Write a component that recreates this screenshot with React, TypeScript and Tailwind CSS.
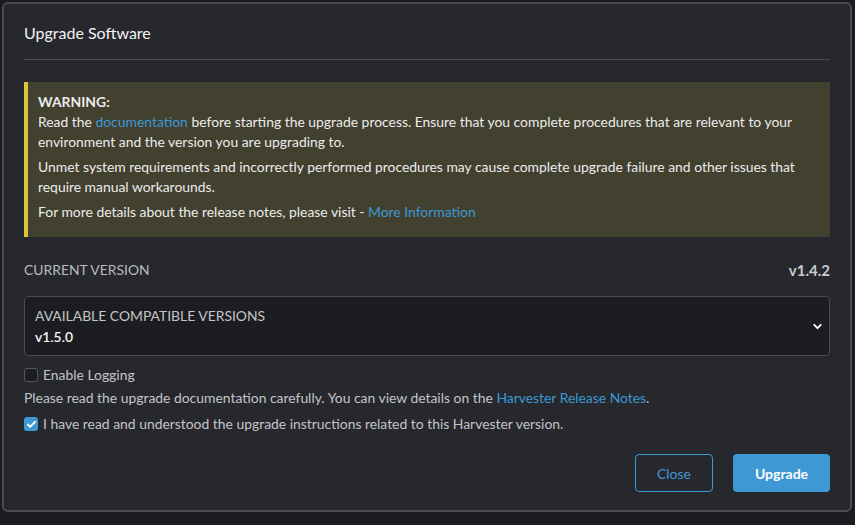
import { ChevronDown, Check } from "lucide-react"

const font = { fontFamily: "Lato, 'Open Sans', sans-serif" }

function Link({ children }: { children: React.ReactNode }) {
  return <a className="text-[#3d98d3] cursor-pointer">{children}</a>
}

export default function App() {
  return (
    <div
      className="w-[855px] h-[525px] bg-[#1b1c21] pt-[2px] pl-[2px] text-[13.9px] antialiased"
      style={font}
    >
      <div className="w-[850px] h-[510px] rounded-[6px] border-2 border-[#4a4b51] bg-[#27282d] px-[20px] flex flex-col">
        {/* header */}
        <div className="pt-[19px] pb-[16px] border-b border-[#4a4b51]">
          <h2 className="text-[16px] leading-[20px] text-[#f2f2f3]">Upgrade Software</h2>
        </div>

        {/* warning banner */}
        <div className="mt-[22px] bg-[#42402f] border-l-4 border-[#dcc43a] pl-[10px] pr-[12px] pt-[10px] pb-[10px] text-[#ececec] leading-[20px]">
          <div className="font-bold">WARNING:</div>
          <p className="mb-[5px]">
            Read the <Link>documentation</Link> before starting the upgrade process. Ensure that you complete
            procedures that are relevant to your environment and the version you are upgrading to.
          </p>
          <p className="mb-[5px]">
            Unmet system requirements and incorrectly performed procedures may cause complete upgrade failure and
            other issues that require manual workarounds.
          </p>
          <p className="mb-[5px]">
            For more details about the release notes, please visit - <Link>More Information</Link>
          </p>
        </div>

        {/* current version */}
        <div className="mt-[23px] flex items-center justify-between leading-[20px]">
          <span className="text-[#b9babe]">CURRENT VERSION</span>
          <span className="font-bold text-[15px] text-[#c9cacd]">v1.4.2</span>
        </div>

        {/* select */}
        <div className="mt-[16px] h-[60px] rounded-[4px] border border-[#4a4b51] bg-[#1c1d21] pl-[10px] pr-[4px] flex items-center justify-between">
          <div className="flex flex-col">
            <span className="leading-[20px] text-[#c3c4c8]">AVAILABLE COMPATIBLE VERSIONS</span>
            <span className="leading-[20px] mt-[1px] text-[#f5f5f5] font-semibold">v1.5.0</span>
          </div>
          <ChevronDown size={13} strokeWidth={3.5} className="text-white mr-[1px]" />
        </div>

        {/* options */}
        <label className="mt-[9px] flex items-center gap-[5px] leading-[20px] text-[#c3c4c8]">
          <span className="w-[14px] h-[14px] rounded-[3px] border border-[#55565c] bg-[#1c1d21]" />
          Enable Logging
        </label>
        <p className="mt-[3px] leading-[20px] text-[#c3c4c8]">
          Please read the upgrade documentation carefully. You can view details on the{" "}
          <Link>Harvester Release Notes</Link>.
        </p>
        <label className="mt-[6px] flex items-center gap-[5px] leading-[20px] text-[#c3c4c8]">
          <span className="w-[14px] h-[14px] rounded-[3px] bg-[#3d98d3] flex items-center justify-center">
            <Check size={11} strokeWidth={4} className="text-white" />
          </span>
          I have read and understood the upgrade instructions related to this Harvester version.
        </label>

        {/* actions */}
        <div className="mt-[20px] flex justify-end gap-[20px]">
          <button className="w-[78px] h-[38px] rounded-[4px] border border-[#3d98d3] text-[#3d98d3] text-[14px]">
            Close
          </button>
          <button className="w-[97px] h-[38px] rounded-[4px] bg-[#3d98d3] text-white text-[14px] font-bold">
            Upgrade
          </button>
        </div>
      </div>
    </div>
  )
}
